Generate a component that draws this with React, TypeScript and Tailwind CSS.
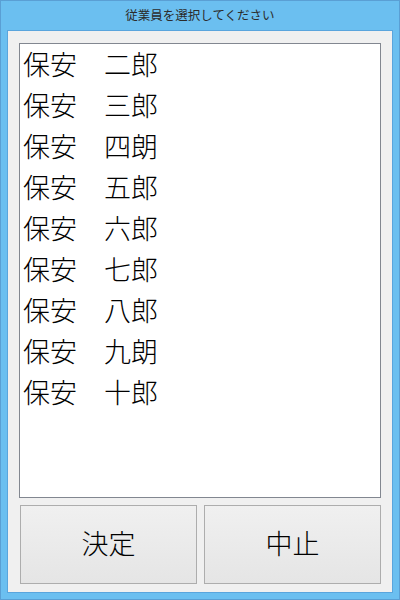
import React from "react";

const employees = ["二郎", "三郎", "四朗", "五郎", "六郎", "七郎", "八郎", "九朗", "十郎"];

const font = { fontFamily: '"Noto Sans CJK JP", "Noto Sans", sans-serif' };

export default function App() {
  return (
    <div
      className="w-[400px] h-[600px] flex flex-col border border-[#5a9fd4] bg-[#6bbff0]"
      style={font}
    >
      {/* TITLE BAR */}
      <div className="h-[29px] flex items-center justify-center text-[12.5px] text-[#2b2b2b] leading-none">
        従業員を選択してください
      </div>

      {/* CLIENT AREA */}
      <div className="mx-[6px] mb-[6px] flex-1 flex flex-col border border-[#5aa5dd] bg-[#f0f0f0] px-[11px] pt-[12px] pb-[8px]">
        <div className="h-[455px] border border-[#828790] bg-white">
          {employees.map((name) => (
            <div key={name} className="h-[41px] flex items-center pl-[3px] pb-[3px] text-[27px] font-light text-black leading-none">
              保安　{name}
            </div>
          ))}
        </div>

        <div className="mt-[7px] pl-[1px] grid grid-cols-2 gap-[7px]">
          <button className="h-[79px] pb-[4px] border border-[#adadad] bg-gradient-to-b from-[#f0f0f0] to-[#e5e5e5] text-[27px] font-light text-black leading-none">
            決定
          </button>
          <button className="h-[79px] pb-[4px] border border-[#adadad] bg-gradient-to-b from-[#f0f0f0] to-[#e5e5e5] text-[27px] font-light text-black leading-none">
            中止
          </button>
        </div>
      </div>
    </div>
  );
}
